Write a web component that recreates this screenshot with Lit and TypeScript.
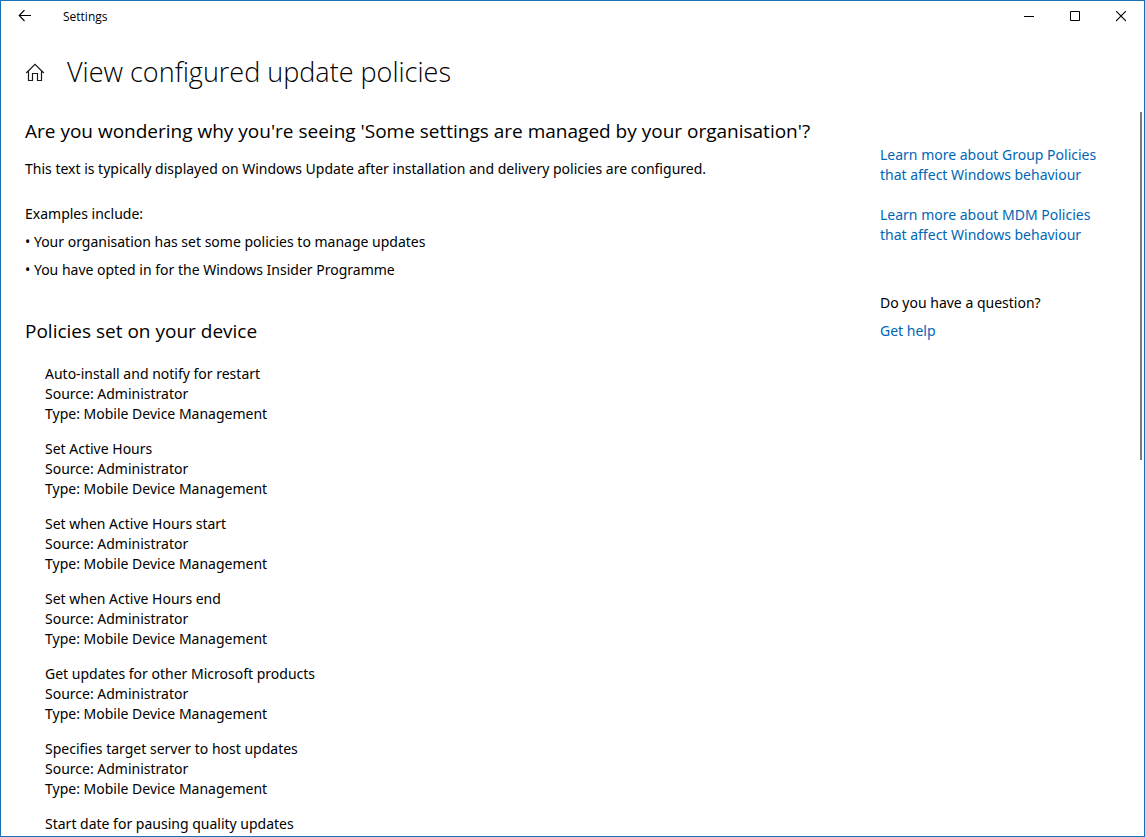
import { LitElement, html, css } from "lit";
import { customElement, property } from "lit/decorators.js";

interface Policy {
  name: string;
  details: string[];
}

const managed = ["Source: Administrator", "Type: Mobile Device Management"];

const policies: Policy[] = [
  { name: "Auto-install and notify for restart", details: managed },
  { name: "Set Active Hours", details: managed },
  { name: "Set when Active Hours start", details: managed },
  { name: "Set when Active Hours end", details: managed },
  { name: "Get updates for other Microsoft products", details: managed },
  { name: "Specifies target server to host updates", details: managed },
  { name: "Start date for pausing quality updates", details: [] },
];

@customElement("title-bar")
class TitleBar extends LitElement {
  static styles = css`
    :host {
      display: flex;
      height: 31px;
      flex: none;
      color: #000;
    }
    button {
      display: flex;
      align-items: center;
      justify-content: center;
      width: 46px;
      padding: 0;
      border: 0;
      background: none;
      color: inherit;
    }
    .back {
      width: 48px;
    }
    .caption {
      flex: 1;
      padding-left: 14px;
      font-family: "Segoe UI", "Open Sans", sans-serif;
      font-size: 12px;
      line-height: 32px;
    }
    svg {
      display: block;
      fill: none;
      stroke: currentColor;
    }
  `;

  render() {
    return html`
      <button class="back" aria-label="Back">
        <svg width="14" height="13" viewBox="0 0 14 13">
          <path d="M1 5.5H13M6.5 0L1.2 5.5L6.5 11" stroke-width="1.1" />
        </svg>
      </button>
      <span class="caption">Settings</span>
      <button aria-label="Minimise">
        <svg width="10" height="11" viewBox="0 0 10 11"><path d="M0 5.5H10" /></svg>
      </button>
      <button aria-label="Maximise">
        <svg width="10" height="11" viewBox="0 0 10 11"><path d="M.5 .5H9.5V9.5H.5Z" /></svg>
      </button>
      <button aria-label="Close">
        <svg width="10" height="11" viewBox="0 0 10 11"><path d="M0 0L10 10M10 0L0 10" stroke-width="1.1" /></svg>
      </button>
    `;
  }
}

@customElement("policy-entry")
class PolicyEntry extends LitElement {
  @property({ attribute: false }) policy!: Policy;

  static styles = css`
    :host {
      display: block;
    }
    p {
      margin: 0;
    }
  `;

  render() {
    return html`
      <p>${this.policy.name}</p>
      ${this.policy.details.map((line) => html`<p>${line}</p>`)}
    `;
  }
}

@customElement("app-root")
class AppRoot extends LitElement {
  static styles = css`
    :host {
      display: flex;
      flex-direction: column;
      box-sizing: border-box;
      height: 100vh;
      border: 1px solid #1a6fb5;
      background: #fff;
      color: #000;
      font-family: "Segoe UI", "Noto Sans", sans-serif;
      font-size: 14px;
      line-height: 20px;
    }
    h1,
    h2,
    p,
    ul {
      margin: 0;
      padding: 0;
      font-weight: 400;
    }
    a {
      color: #0066b4;
      text-decoration: none;
    }
    .header {
      display: flex;
      flex: none;
      align-items: center;
      gap: 22px;
      padding: 20px 24px;
    }
    .home {
      display: block;
      color: #1a1a1a;
    }
    .home svg {
      display: block;
      fill: none;
      stroke: currentColor;
      stroke-width: 1.2;
    }
    h1,
    h2 {
      font-family: "Segoe UI", "Open Sans", sans-serif;
    }
    h1 {
      font-size: 27px;
      font-weight: 300;
      line-height: 40px;
    }
    h2 {
      font-size: 19px;
      line-height: 28px;
    }
    .body {
      display: flex;
      flex: 1;
      min-height: 0;
    }
    .content {
      display: flex;
      flex: 1;
      min-width: 0;
      overflow: auto;
      scrollbar-width: none;
    }
    .main {
      flex: 1;
      min-width: 0;
      padding: 5px 24px 0;
    }
    .intro {
      padding-top: 14px;
    }
    .examples {
      padding: 25px 0 37px;
    }
    .examples ul {
      list-style: none;
    }
    .examples li {
      padding-top: 8px;
    }
    .policies {
      display: flex;
      flex-direction: column;
      gap: 15px;
      padding: 19px 20px 0;
    }
    .side {
      display: flex;
      flex: none;
      flex-direction: column;
      align-items: flex-start;
      gap: 20px;
      width: 224px;
      padding: 33px 36px 0 0;
    }
    .help {
      display: flex;
      flex-direction: column;
      gap: 8px;
      padding-top: 28px;
    }
    .scrollbar {
      flex: none;
      width: 4px;
    }
    .thumb {
      width: 2px;
      height: 48%;
      background: #7a7a7a;
    }
  `;

  render() {
    return html`
      <title-bar></title-bar>
      <header class="header">
        <a class="home" href="#" aria-label="Home">
          <svg width="20" height="20" viewBox="0 0 20 20">
            <path d="M1.2 11L10 2.4L18.8 11M3.5 9.2V18.5H7.5V11.5H12.5V18.5H16.5V9.2" />
          </svg>
        </a>
        <h1>View configured update policies</h1>
      </header>
      <div class="body">
        <div class="content">
          <main class="main">
            <h2>Are you wondering why you're seeing 'Some settings are managed by your organisation'?</h2>
            <p class="intro">This text is typically displayed on Windows Update after installation and delivery policies are configured.</p>
            <div class="examples">
              <p>Examples include:</p>
              <ul>
                <li>• Your organisation has set some policies to manage updates</li>
                <li>• You have opted in for the Windows Insider Programme</li>
              </ul>
            </div>
            <h2>Policies set on your device</h2>
            <div class="policies">
              ${policies.map((policy) => html`<policy-entry .policy=${policy}></policy-entry>`)}
            </div>
          </main>
          <aside class="side">
            <a href="#">Learn more about Group Policies that affect Windows behaviour</a>
            <a href="#">Learn more about MDM Policies that affect Windows behaviour</a>
            <div class="help">
              <p>Do you have a question?</p>
              <a href="#">Get help</a>
            </div>
          </aside>
        </div>
        <div class="scrollbar"><div class="thumb"></div></div>
      </div>
    `;
  }
}
